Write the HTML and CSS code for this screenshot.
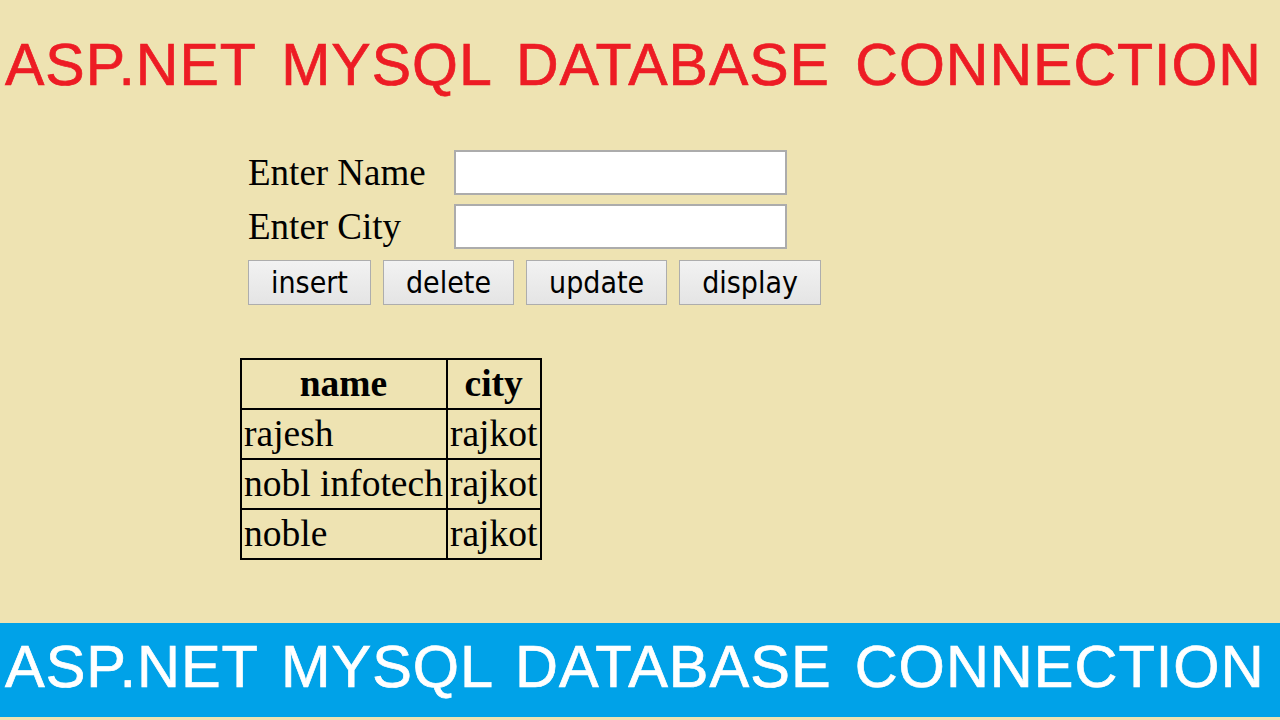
FILE: index.html
```html
<!DOCTYPE html>
<html lang="en">
<head>
    <meta charset="UTF-8">
    <title>ASP.NET MYSQL DATABASE CONNECTION</title>
    <link rel="stylesheet" href="styles.css">
</head>
<body>
    <h1 class="title">ASP.NET MYSQL DATABASE CONNECTION</h1>
    <form class="entry-form">
        <div class="fields">
            <label for="name">Enter Name</label>
            <input type="text" id="name" name="name">
            <label for="city">Enter City</label>
            <input type="text" id="city" name="city">
        </div>
        <div class="actions">
            <button type="button">insert</button>
            <button type="button">delete</button>
            <button type="button">update</button>
            <button type="button">display</button>
        </div>
    </form>
    <table class="records">
        <tr><th>name</th><th>city</th></tr>
        <tr><td>rajesh</td><td>rajkot</td></tr>
        <tr><td>nobl infotech</td><td>rajkot</td></tr>
        <tr><td>noble</td><td>rajkot</td></tr>
    </table>
    <div class="banner">ASP.NET MYSQL DATABASE CONNECTION</div>
</body>
</html>
```

FILE: styles.css
```css
html, body { height: 100%; }
body { margin: 0; background: #eee3b2; display: flex; flex-direction: column; font-family: "Liberation Serif", "Times New Roman", serif; color: #000; }
.title { margin: 31px 0 0; padding-left: 5px; font-family: "Liberation Sans", Arial, sans-serif; font-size: 59px; font-weight: normal; line-height: 68px; letter-spacing: 1px; word-spacing: 8px; color: #ed1c24; -webkit-text-stroke: 0.7px #ed1c24; white-space: nowrap; }
.entry-form { margin: 51px 0 0 248px; }
.fields { display: grid; grid-template-columns: 206px 333px; row-gap: 9px; align-items: center; }
.fields label { font-size: 37px; line-height: 45px; }
.fields input { box-sizing: border-box; width: 333px; height: 45px; margin: 0; border: 2px solid #acacac; background: #fff; padding: 0 4px; }
.actions { display: flex; gap: 12px; margin-top: 11px; }
.actions button { height: 45px; padding: 0 22px; margin: 0; border: 1px solid #adadad; border-radius: 0; background: linear-gradient(#f2f2f2, #e4e4e4); font-family: "DejaVu Sans Condensed", "DejaVu Sans", sans-serif; font-stretch: condensed; font-size: 30px; color: #000; }
.records { margin: 53px 0 0 240px; border-collapse: collapse; border: 2px solid #000; align-self: flex-start; }
.records th, .records td { border: 2px solid #000; padding: 0 3px 0 2px; font-size: 37.5px; line-height: 48px; white-space: nowrap; }
.records td { text-align: left; }
.banner { margin-top: auto; margin-bottom: 3px; padding: 0 0 6px 5px; background: #00a2e8; color: #fff; font-family: "Liberation Sans", Arial, sans-serif; font-size: 59.5px; line-height: 88px; letter-spacing: 1px; word-spacing: 5.5px; -webkit-text-stroke: 0.7px #fff; white-space: nowrap; }
```
